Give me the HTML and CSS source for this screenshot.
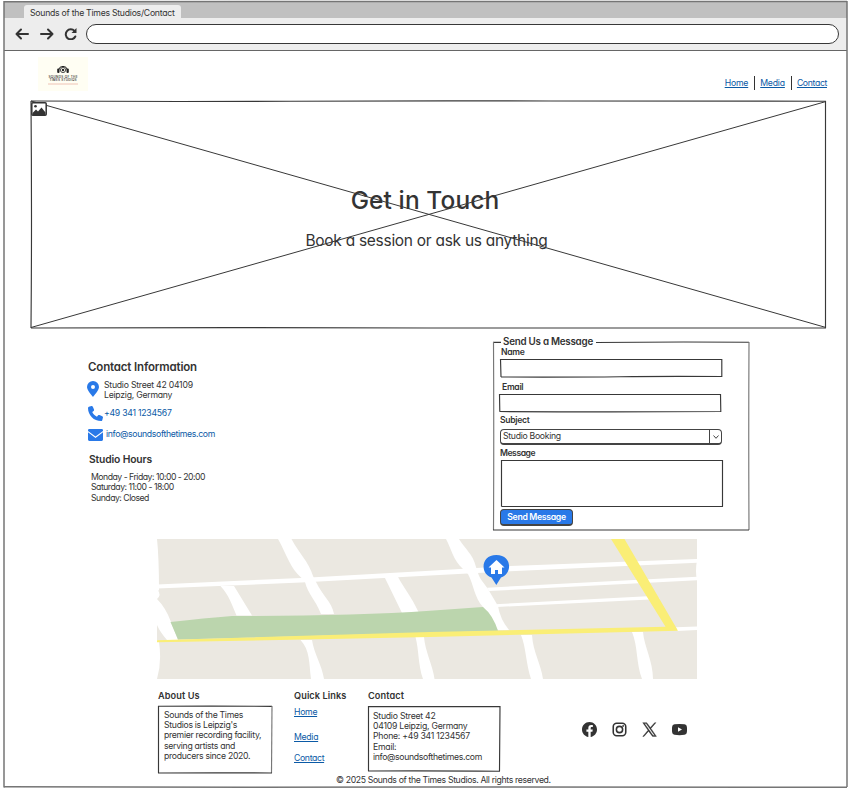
FILE: index.html
```html
<!DOCTYPE html>
<html lang="en">
<head>
<meta charset="utf-8">
<title>Sounds of the Times Studios/Contact</title>
<link rel="stylesheet" href="styles.css">
</head>
<body>
<div class="browser">
  <svg class="sketch frame-line" viewBox="0 0 843 787" preserveAspectRatio="none"><path d="M0 .8Q200 1.200 420 .5T843 .5"/><path d="M0 0V786.500"/><path d="M843 0Q843.500 300 843 786"/><path d="M0 785.800Q210 786.500 420 786T843 786.300"/></svg>
  <div class="tabs"><div class="tab">Sounds of the Times Studios/Contact</div></div>
  <div class="toolbar">
    <svg class="tool" viewBox="0 0 14 12"><path d="M13 6H1.500M6 1.500L1.500 6L6 10.500"/></svg>
    <svg class="tool" viewBox="0 0 14 12"><path d="M1 6H12.500M8 1.500L12.500 6L8 10.500"/></svg>
    <svg class="tool reload" viewBox="0 0 14 12"><path d="M10.500 3A5 5 0 1 0 11.300 8.500"/><path class="solid" d="M12.500 0V5H7.500Z"/></svg>
    <div class="address"></div>
  </div>

  <header class="header">
    <div class="logo">
      <svg viewBox="0 0 50 33"><path class="band" d="M20.500 13A4.600 4.600 0 0 1 29.500 13"/><rect x="19.200" y="11.500" width="2.300" height="4.500" rx="1"/><rect x="28.500" y="11.500" width="2.300" height="4.500" rx="1"/><circle class="ring" cx="25" cy="13" r="2.600"/><circle cx="25" cy="13" r="1.200"/><text x="25" y="21" textLength="29">SOUNDS OF THE</text><text x="25" y="24" textLength="27">TIMES STUDIOS</text><path class="rule" d="M10 27H40"/></svg>
    </div>
    <nav class="nav"><a href="#">Home</a><i></i><a href="#">Media</a><i></i><a href="#">Contact</a></nav>
  </header>

  <section class="hero">
    <svg class="sketch" viewBox="0 0 795 228" preserveAspectRatio="none"><path d="M0 0Q130 .8 260 .2T520 0T795 .2"/><path d="M0 0Q1 120 0 227"/><path d="M794.500 0Q794 120 794.500 227"/><path d="M0 227Q200 226.300 400 227T795 227"/><path class="thin" d="M0 0L795 226.500M0 226.500L795 .5"/></svg>
    <svg class="image-icon" viewBox="0 0 16 14"><rect x=".8" y=".8" width="14.400" height="12.400" rx="1"/><path d="M1.500 13V11L5 7.500L7 9.500L10.500 5.500L14.500 10.500V13Z"/><circle cx="4.500" cy="4.300" r="1.300"/></svg>
    <h1>Get in Touch</h1>
    <p>Book a session or ask us anything</p>
  </section>

  <main class="contact">
    <div class="info">
      <h2>Contact Information</h2>
      <ul class="details">
        <li><svg class="pin" viewBox="0 0 12 16"><path d="M6 0A6 6 0 0 0 0 6C0 9.500 5 14.500 6 16C7 14.500 12 9.500 12 6A6 6 0 0 0 6 0ZM6 4A2 2 0 1 1 6 8A2 2 0 1 1 6 4Z"/></svg><span class="addr">Studio Street 42 04109<br>Leipzig, Germany</span></li>
        <li><svg class="phone" viewBox="0 0 512 512"><path d="M164.900 24.600c-7.700-18.600-28-28.500-47.400-23.200l-88 24C12.100 30.200 0 46 0 64C0 311.400 200.600 512 448 512c18 0 33.800-12.100 38.600-29.500l24-88c5.300-19.400-4.600-39.700-23.200-47.400l-96-40c-16.300-6.800-35.200-2.100-46.300 11.600L304.700 368C234.300 334.700 177.300 277.700 144 207.300L193.300 167c13.700-11.200 18.400-30 11.600-46.300l-40-96z"/></svg><a class="tel" href="#">+49 341 1234567</a></li>
        <li><svg class="mail" viewBox="0 0 15 12"><path d="M1.300 0H13.700Q15 0 15 1.300V2L7.500 7.600L0 2V1.300Q0 0 1.300 0ZM0 3.300L7.500 8.900L15 3.300V10.600Q15 12 13.700 12H1.300Q0 12 0 10.600Z"/></svg><a class="email" href="#">info@soundsofthetimes.com</a></li>
      </ul>
      <h3>Studio Hours</h3>
      <p class="hours">Monday - Friday: 10:00 - 20:00<br>Saturday: 11:00 - 18:00<br>Sunday: Closed</p>
    </div>
    <form class="form">
      <svg class="sketch" viewBox="0 0 256 188" preserveAspectRatio="none"><path d="M0 .3H8M103 .5Q180 -.3 256 .3"/><path class="soft" d="M.5 0Q1 90 .5 188"/><path class="soft" d="M256 0Q255.500 90 256 188"/><path d="M0 188Q120 187.500 256 188"/></svg>
      <div class="legend">Send Us a Message</div>
      <label class="l-name">Name</label>
      <div class="field"><svg class="sketch" viewBox="0 0 222 18" preserveAspectRatio="none"><path d="M.5 .5Q110 .8 222 .5M.5 0L1 18M221.800 0V18M1 18Q80 18.200 120 17.700T222 17.500"/></svg></div>
      <label class="l-email">Email</label>
      <div class="field f-email"><svg class="sketch" viewBox="0 0 222 18" preserveAspectRatio="none"><path d="M.5 .5Q110 .2 221.500 .5M.5 0L.8 17.500M221.500 0L221.800 18M.5 17.500Q110 18.200 222 17.500"/></svg></div>
      <label class="l-subject">Subject</label>
      <div class="select"><span class="value">Studio Booking</span><span class="drop"><svg viewBox="0 0 6 4"><path d="M.5 .5L3 3.300L5.500 .5"/></svg></span></div>
      <label class="l-message">Message</label>
      <div class="field f-message"><svg class="sketch" viewBox="0 0 222 47" preserveAspectRatio="none"><path d="M.5 .5Q110 .2 221.500 .5M.5 0V46.500M221.500 0V46.500M.5 46.500Q110 46.200 222 46.500"/></svg></div>
      <button type="button">Send Message</button>
    </form>
  </main>

  <svg class="map" viewBox="157 539 540 140">
    <path class="land" d="M157 539H697V560Q695 572 697 580V679H157Q162 662 159 642L157 640V592L159 590Q159 558 157 539Z"/>
    <g class="road">
      <path d="M157 584.500L301 578L430 570.700L510 566L697 559V562.700L510 571.300L430 575.500L301 582.500L157 588.500Z"/>
      <path d="M487 587.700L697 576.700V580.300L489 591Z"/><path d="M495 604.300L652 596L660 599L497 607Z"/>
      <path d="M278 539H291.500C298 552 309 562 313 576L316 582C322 595 332 602 334 614H321C315 599 308 594 305 582L301.500 578C290 568 287 555 278 539Z"/>
      <path d="M220.500 586H234L252 615.500H236.500C232 605 229 595 220.500 586Z"/><path d="M384 576H397.500C405 590 411 596 418.500 612L402 613Z"/>
      <path d="M446 539H459C465 549 473 554 476 567L478 573C480 580 485 584 488 589L498 606Q500 619 509 630H498L483 607C474 597 474 585 468 574L463 569C453 560 451 548 446 539Z"/>
      <path d="M157 599Q166 608 171 622L178 640H167Q160 632 157 625Z"/><path d="M157 589Q162 595 157 599Z"/>
      <path d="M300.500 640H312C314 654 322 665 324 679H311C309 663 310 650 300.500 640Z"/><path d="M415.500 637H424C425 651 433 666 434.500 679H423C418 665 419 650 415.500 637Z"/>
      <path d="M521 635H532C533 652 541 664 543 679H531C526 664 526 647 521 635Z"/><path d="M632 632H643C644 646 653 661 653 679H642C636 664 638 646 632 632Z"/>
      <path d="M676 627.300L697 626.500V630L677 631Z"/>
    </g>
    <path class="park" d="M170.500 622Q205 618 232 616Q350 616 430 610.700L483 607Q493 615 498 631L178 639.500Z"/>
    <path class="highway" d="M157 640.300L430 632L665.500 626.700L611 539H624.500L678 630.700L430 637L157 642.300Z"/>
    <path class="marker" d="M496.300 585L491.500 577.500C480 574 480.500 555 496.300 555C512.500 555 512.500 574 501 577.500Z"/>
    <path class="house" d="M496.500 560L504.500 567.500H502V574H498V570H495V574H491V567.500H488.500Z"/>
  </svg>

  <footer class="footer">
    <section class="about">
      <h4>About Us</h4>
      <div class="box"><svg class="sketch" viewBox="0 0 114 67" preserveAspectRatio="none"><path d="M0 .3Q60 -.2 114 .4M.5 0V67"/><path class="soft" d="M114 0L113.500 67"/><path d="M0 67Q60 66.700 114 67"/></svg>
      Sounds of the Times<br>Studios is Leipzig's<br>premier recording facility,<br>serving artists and<br>producers since 2020.</div>
    </section>
    <section class="links">
      <h4>Quick Links</h4>
      <a href="#">Home</a>
      <a href="#">Media</a>
      <a href="#">Contact</a>
    </section>
    <section class="reach">
      <h4>Contact</h4>
      <div class="box"><svg class="sketch" viewBox="0 0 132 65" preserveAspectRatio="none"><path d="M0 .5Q60 .8 132 .5M.5 0V65M132 0L131.500 65M0 65Q60 64.700 132 65.200"/></svg>
      Studio Street 42<br>04109 Leipzig, Germany<br>Phone: +49 341 1234567<br>Email:<br><span class="email">info@soundsofthetimes.com</span></div>
    </section>
    <div class="social">
      <svg viewBox="0 0 24 24"><path d="M24 12.070C24 5.400 18.600 0 12 0S0 5.400 0 12.070c0 6.030 4.390 11.020 10.130 11.930v-8.440H7.080v-3.490h3.050V9.410c0-3.020 1.790-4.690 4.530-4.690 1.310 0 2.690.24 2.690.24v2.970h-1.520c-1.490 0-1.960.93-1.960 1.880v2.260h3.330l-.53 3.490h-2.800V24C19.610 23.090 24 18.100 24 12.070z"/></svg>
      <svg viewBox="0 0 24 24"><rect class="o" x="2" y="2" width="20" height="20" rx="5.500"/><circle class="o" cx="12" cy="12" r="5"/><circle cx="17.800" cy="6.200" r="1.500"/></svg>
      <svg viewBox="0 0 24 24"><path class="x" d="M14.300 10.200L22.300 1h-2L13.400 8.800L7.500 1H1.200l8.400 12.300L1.200 23h2l7.300-8.300 6.300 8.300h6.300zM4 2.500h2.600l13.700 19h-2.600z"/></svg>
      <svg viewBox="0 0 24 24"><path d="M4 3.500Q12 2.500 20 3.500Q23.500 4 23.800 7.500Q24.300 12 23.800 16.500Q23.500 20 20 20.500Q12 21.500 4 20.500Q.5 20 .2 16.500Q-.3 12 .2 7.500Q.5 4 4 3.500ZM9.600 8.300V15.700L16 12Z"/></svg>
    </div>
  </footer>
  <div class="copyright">© 2025 Sounds of the Times Studios. All rights reserved.</div>
</div>
</body>
</html>
```
FILE: styles.css
```css
* { box-sizing: border-box; }
body { margin: 0; width: 852px; height: 791px; overflow: hidden; background: #fff; color: #333; font-family: Inter, "Liberation Sans", sans-serif; font-feature-settings: "cv11"; font-size: 8.7px; line-height: 10.4px; letter-spacing: -.3px; }
h1, h2, h3, h4, p, ul { margin: 0; padding: 0; }
h1, h2, h3, h4 { font-weight: 600; }
ul { list-style: none; }
a { color: #0b5aa6; }
svg { display: block; flex: none; }
.browser { position: relative; width: 843px; height: 787px; margin: 1px 0 0 4px; }
.sketch { position: absolute; inset: 0; width: 100%; height: 100%; overflow: visible; pointer-events: none; fill: none; stroke: #383838; stroke-width: 1.15; }
.sketch path { vector-effect: non-scaling-stroke; }
.sketch .thin { stroke-width: 1; }
.sketch .soft { stroke: #777; }
.frame-line { stroke: #757575; stroke-width: 1.5; z-index: 2; }
.tabs { height: 17px; background: #c0c0c0; padding: 4px 0 0 20px; }
.tab { width: 157px; height: 13px; background: #ededed; border-radius: 3px 3px 0 0; padding-left: 6px; line-height: 17px; white-space: nowrap; letter-spacing: -.26px; }
.toolbar { height: 33px; background: #ededed; border-bottom: 1.500px solid #666; display: flex; align-items: center; padding: 0 0 0 11px; }
.tool { width: 14px; height: 12px; margin-right: 11px; fill: none; stroke: #333; stroke-width: 2; stroke-linecap: round; stroke-linejoin: round; }
.tool.reload { margin: 0 8px 0 -1px; }
.tool .solid { fill: #333; stroke: none; }
.address { width: 753px; height: 20px; border: 1.500px solid #383838; border-radius: 10px; background: #fff; }
.header { height: 50px; display: flex; justify-content: space-between; align-items: flex-start; padding: 6px 20px 0 34px; }
.logo { width: 50px; height: 34px; background: #fffef3; }
.logo svg { width: 50px; height: 33px; fill: #222; }
.logo .band { fill: none; stroke: #222; stroke-width: 1; }
.logo .ring { fill: none; stroke: #222; stroke-width: .8; }
.logo text { font-size: 3.100px; font-weight: 500; text-anchor: middle; letter-spacing: 0; }
.logo .rule { stroke: #eab5a5; stroke-width: .8; }
.nav { display: flex; align-items: center; height: 14px; margin-top: 19px; letter-spacing: -.2px; }
.nav i { width: 1px; height: 14px; background: #333; margin: 0 5px 0 6px; }
.nav a:last-child { letter-spacing: -.35px; }
.hero { position: relative; width: 795px; height: 228px; margin-left: 27px; text-align: center; padding-top: 83px; }
.image-icon { position: absolute; left: 0; top: 1px; width: 16px; height: 14px; fill: #333; }
.image-icon rect { fill: #fff; stroke: #333; stroke-width: 1.500; }
h1 { font-size: 24.500px; line-height: 32px; font-weight: 500; padding-right: 7px; letter-spacing: .1px; }
.hero p { font-size: 15.500px; line-height: 20px; margin-top: 15px; padding-right: 4px; letter-spacing: -.28px; }
.contact { display: flex; height: 210px; }
.info { width: 489px; padding: 31px 0 0 84px; }
h2 { font-size: 11.500px; line-height: 14px; letter-spacing: -.16px; }
.details { margin-top: 6px; letter-spacing: -.25px; }
.details li { display: flex; align-items: center; height: 20.600px; }
.details li:nth-child(2) { height: 17px; margin-top: 4px; }
.details li:nth-child(3) { height: 16px; margin-top: 5px; }
.details svg { fill: #2979e8; }
.details a { text-decoration: none; }
.details .tel { padding-top: 1px; }
.email { letter-spacing: -.34px; }
.pin { width: 12px; height: 16px; margin: -2px 5px 0 -1px; }
.phone { width: 15px; height: 15px; margin-right: 1px; }
.mail { width: 15px; height: 12px; margin-right: 3px; }
h3 { font-size: 10.300px; line-height: 14px; margin: 9px 0 0 1px; letter-spacing: -.14px; }
.hours { line-height: 10.500px; margin: 6px 0 0 3px; letter-spacing: -.5px; }
.form { position: relative; width: 256px; height: 188px; margin-top: 13px; padding-left: 7px; }
.legend { font-size: 9.800px; font-weight: 600; line-height: 10px; height: 5px; margin: 0 0 0 3px; position: relative; top: -5px; letter-spacing: -.24px; }
.form label { display: block; font-weight: 600; font-size: 8.600px; line-height: 10px; }
.form .l-name { margin-left: 1px; }
.field { position: relative; width: 222px; height: 18px; margin-top: 2px; }
.form .l-email { margin: 5px 0 0 2px; }
.f-email { margin-left: -1px; }
.form .l-subject { margin-top: 3px; }
.select { display: flex; width: 222px; height: 16px; margin-top: 4px; border: 1.300px solid #444; border-bottom-width: 2px; border-radius: 4px; }
.select .value { flex: 1; line-height: 13px; padding-left: 2px; }
.drop { width: 12px; border-left: 1px solid #444; display: grid; place-items: center; }
.drop svg { width: 6px; height: 4px; fill: none; stroke: #444; }
.form .l-message { margin-top: 3px; letter-spacing: -.45px; }
.f-message { height: 47px; margin-left: 1px; }
button { display: block; width: 73px; height: 17px; margin-top: 2px; padding: 0; border: 1.300px solid #444; border-bottom-width: 2px; border-radius: 4px; background: #2979e8; color: #fff; font: inherit; font-weight: 600; line-height: 13px; letter-spacing: -.33px; }
.map { width: 540px; height: 140px; margin-left: 153px; }
.land { fill: #ebe8e1; }
.road, .house { fill: #fff; }
.park { fill: #bbd5ad; }
.highway { fill: #faee76; }
.marker { fill: #2979e8; }
.footer { display: flex; height: 96px; padding: 12px 0 0 154px; }
h4 { font-size: 9.200px; line-height: 10px; letter-spacing: .08px; }
.box { position: relative; margin-top: 4.500px; padding: 4px 0 0 6px; white-space: nowrap; }
.about { width: 136px; }
.about .box { width: 114px; height: 67px; }
.links { width: 74px; }
.links a { display: block; height: 10.400px; margin-top: 6px; }
.links a:nth-of-type(2) { margin-top: 15px; }
.links a:nth-of-type(3) { margin-top: 10px; letter-spacing: -.35px; }
.reach .box { width: 132px; height: 65px; padding: 5px 0 0 5px; letter-spacing: -.25px; }
.reach .email { letter-spacing: -.34px; }
.social { display: flex; gap: 15px; margin: 31px 0 0 82px; fill: #333; }
.social svg { width: 15px; height: 15px; }
.social .o { fill: none; stroke: #333; stroke-width: 2.500; }
.social .x { stroke: #333; stroke-width: .6; }
.copyright { padding-left: 332px; letter-spacing: -.35px; }
```
